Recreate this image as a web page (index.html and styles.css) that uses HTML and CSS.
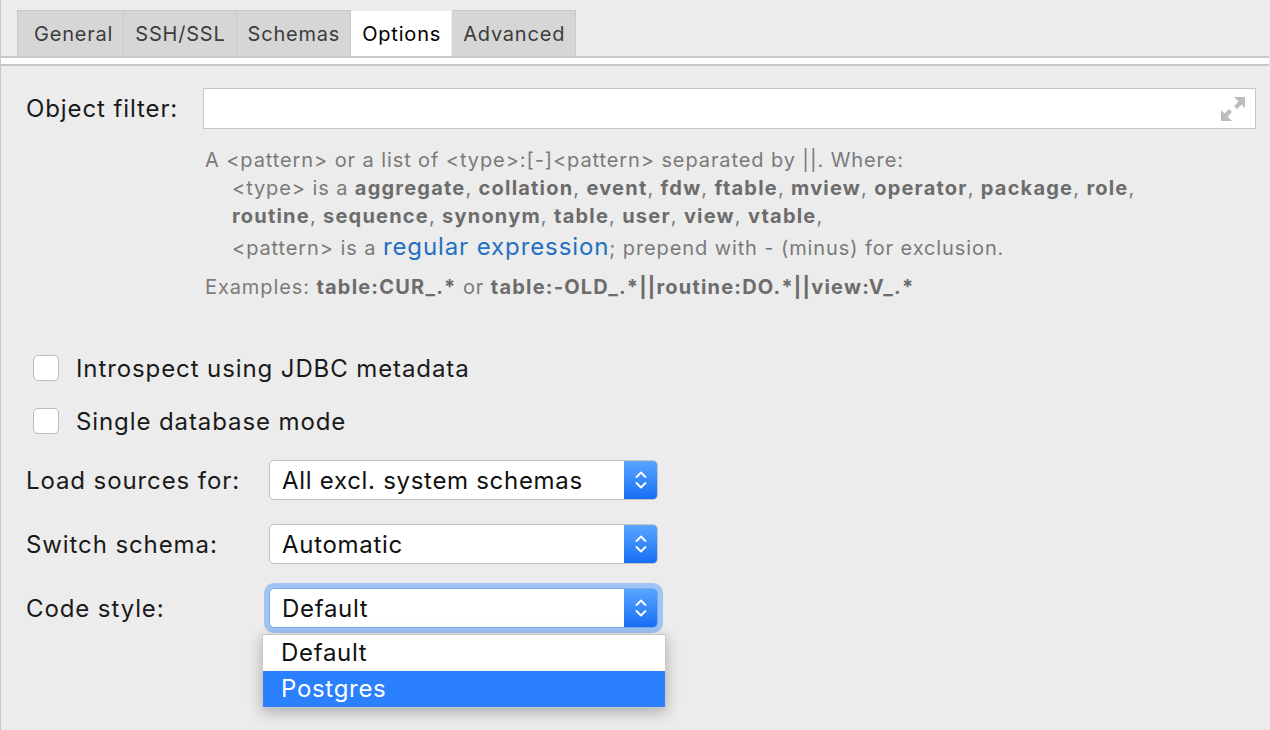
FILE: index.html
```html
<!DOCTYPE html>
<html>
<head>
<meta charset="utf-8">
<link rel="stylesheet" href="styles.css">
</head>
<body>
<div class="window">
  <div class="tabs">
    <div class="tab">General</div>
    <div class="tab">SSH/SSL</div>
    <div class="tab">Schemas</div>
    <div class="tab active">Options</div>
    <div class="tab">Advanced</div>
  </div>
  <div class="sep"></div>
  <div class="content">
    <div class="filter-row">
      <div class="label filter-label">Object filter:</div>
      <div class="input">
        <svg class="expand" width="26" height="26" viewBox="0 0 26 26">
          <path d="M14 1h11v11l-3.5-3.5-4.5 4.5-3-3 4.5-4.5z" fill="#bdbdbd"/>
          <path d="M12 25H1V14l3.5 3.5 4.5-4.5 3 3-4.5 4.5z" fill="#bdbdbd"/>
        </svg>
      </div>
    </div>
    <div class="help">
      <div class="hl l1">A &lt;pattern&gt; or a list of &lt;type&gt;:[-]&lt;pattern&gt; separated by ||. Where:</div>
      <div class="hl ind">&lt;type&gt; is a <b>aggregate</b>, <b>collation</b>, <b>event</b>, <b>fdw</b>, <b>ftable</b>, <b>mview</b>, <b>operator</b>, <b>package</b>, <b>role</b>,</div>
      <div class="hl ind"><b>routine</b>, <b>sequence</b>, <b>synonym</b>, <b>table</b>, <b>user</b>, <b>view</b>, <b>vtable</b>,</div>
      <div class="hl ind l4">&lt;pattern&gt; is a <span class="link">regular expression</span>; prepend with - (minus) for exclusion.</div>
      <div class="hl l5">Examples: <b>table:CUR_.*</b> or <b>table:-OLD_.*||routine:DO.*||view:V_.*</b></div>
    </div>
    <div class="checks">
      <label class="check"><span class="box"></span><span class="ctext">Introspect using JDBC metadata</span></label>
      <label class="check"><span class="box"></span><span class="ctext">Single database mode</span></label>
    </div>
    <div class="form">
      <div class="label">Load sources for:</div>
      <div class="combo"><span class="val">All excl. system schemas</span><span class="arrows"><svg width="14" height="22" viewBox="0 0 14 22"><path d="M2.5 8l4.5-4.5 4.5 4.5M2.5 14l4.5 4.5 4.5-4.5" fill="none" stroke="#fff" stroke-width="1.8" stroke-linecap="round" stroke-linejoin="round"/></svg></span></div>
      <div class="label">Switch schema:</div>
      <div class="combo"><span class="val">Automatic</span><span class="arrows"><svg width="14" height="22" viewBox="0 0 14 22"><path d="M2.5 8l4.5-4.5 4.5 4.5M2.5 14l4.5 4.5 4.5-4.5" fill="none" stroke="#fff" stroke-width="1.8" stroke-linecap="round" stroke-linejoin="round"/></svg></span></div>
      <div class="label">Code style:</div>
      <div class="combo-wrap">
        <div class="combo focused"><span class="val">Default</span><span class="arrows"><svg width="14" height="22" viewBox="0 0 14 22"><path d="M2.5 8l4.5-4.5 4.5 4.5M2.5 14l4.5 4.5 4.5-4.5" fill="none" stroke="#fff" stroke-width="1.8" stroke-linecap="round" stroke-linejoin="round"/></svg></span></div>
        <div class="popup">
          <div class="item">Default</div>
          <div class="item sel">Postgres</div>
        </div>
      </div>
    </div>
  </div>
</div>
</body>
</html>
```
FILE: styles.css
```css
html, body {
  margin: 0;
  padding: 0;
  background: #ececec;
}
body {
  font-family: "Inter", "Roboto", "Liberation Sans", sans-serif;
  color: #1a1a1a;
}
.window {
  width: 1269px;
  height: 730px;
  border-left: 1px solid #c8c8c8;
  box-sizing: border-box;
  overflow: hidden;
}
.tabs {
  display: flex;
  margin: 10px 0 0 16px;
  height: 46px;
}
.tab {
  box-sizing: border-box;
  height: 46px;
  padding: 0 10px 0 11px;
  background: #d6d6d6;
  border: 1px solid #c9c9c9;
  border-left: none;
  border-bottom: none;
  font-size: 20px;
  letter-spacing: 0.8px;
  line-height: 46px;
  color: #3c3c3c;
}
.tab:first-child {
  border-left: 1px solid #c9c9c9;
  padding-left: 16px;
}
.tab.active {
  background: #fff;
  color: #000;
  border-top-color: #ececec;
  border-right-color: #ececec;
}
.sep {
  height: 6px;
  background: #fff;
  border-top: 2px solid #c8c8c8;
  border-bottom: 2px solid #c8c8c8;
}
.content {
  padding: 22px 13px 0 25px;
}
.label {
  font-size: 24px;
  letter-spacing: 0.9px;
  color: #1a1a1a;
}
.filter-row {
  display: flex;
  align-items: center;
}
.filter-label {
  width: 177px;
}
.input {
  flex: 1;
  height: 41px;
  box-sizing: border-box;
  background: #fff;
  border: 1px solid #c6c6c6;
  display: flex;
  align-items: center;
  justify-content: flex-end;
  padding-right: 9px;
}
.help {
  margin: 17px 0 0 179px;
  font-size: 20px;
  letter-spacing: 0.9px;
  color: #7a7a7a;
}
.help b {
  color: #6c6c6c;
  font-weight: 700;
  letter-spacing: 1.2px;
}
.hl {
  line-height: 28px;
  white-space: nowrap;
}
.ind {
  padding-left: 27px;
}
.l4 {
  margin-top: 3px;
}
.link {
  color: #2470c2;
  font-size: 24px;
  letter-spacing: 0.9px;
}
.l5 {
  margin-top: 11px;
}
.checks {
  margin: 47px 0 0 7px;
  display: flex;
  flex-direction: column;
  gap: 13px;
}
.check {
  display: flex;
  align-items: center;
  height: 40px;
  gap: 17px;
}
.box {
  width: 26px;
  height: 26px;
  box-sizing: border-box;
  background: #fff;
  border: 1px solid #bcbcbc;
  border-radius: 5px;
}
.ctext {
  font-size: 24px;
  letter-spacing: 0.9px;
  color: #1a1a1a;
}
.form {
  margin-top: 19px;
  display: grid;
  grid-template-columns: 243px 389px;
  grid-auto-rows: 40px;
  row-gap: 24px;
  align-items: center;
}
.combo-wrap {
  position: relative;
  height: 40px;
}
.combo {
  height: 40px;
  box-sizing: border-box;
  background: #fff;
  border: 1px solid #c4c4c4;
  border-radius: 5px;
  display: flex;
  align-items: center;
  overflow: hidden;
}
.combo.focused {
  border-color: #7ea9e8;
  box-shadow: 0 0 0 5px #a0c4f5;
}
.val {
  flex: 1;
  padding-left: 12px;
  font-size: 24px;
  letter-spacing: 0.7px;
  color: #111;
}
.arrows {
  width: 33px;
  height: 100%;
  background: linear-gradient(#58a5ff, #1770f4);
  display: flex;
  align-items: center;
  justify-content: center;
}
.popup {
  position: absolute;
  left: -7px;
  top: 46px;
  width: 402px;
  background: #fff;
  border: 1px solid #c9c9c9;
  box-shadow: 0 4px 14px rgba(0, 0, 0, 0.28);
}
.item {
  height: 36px;
  line-height: 36px;
  padding-left: 18px;
  font-size: 24px;
  letter-spacing: 0.7px;
  color: #111;
}
.item.sel {
  background: #2b80fe;
  color: #fff;
}
```
